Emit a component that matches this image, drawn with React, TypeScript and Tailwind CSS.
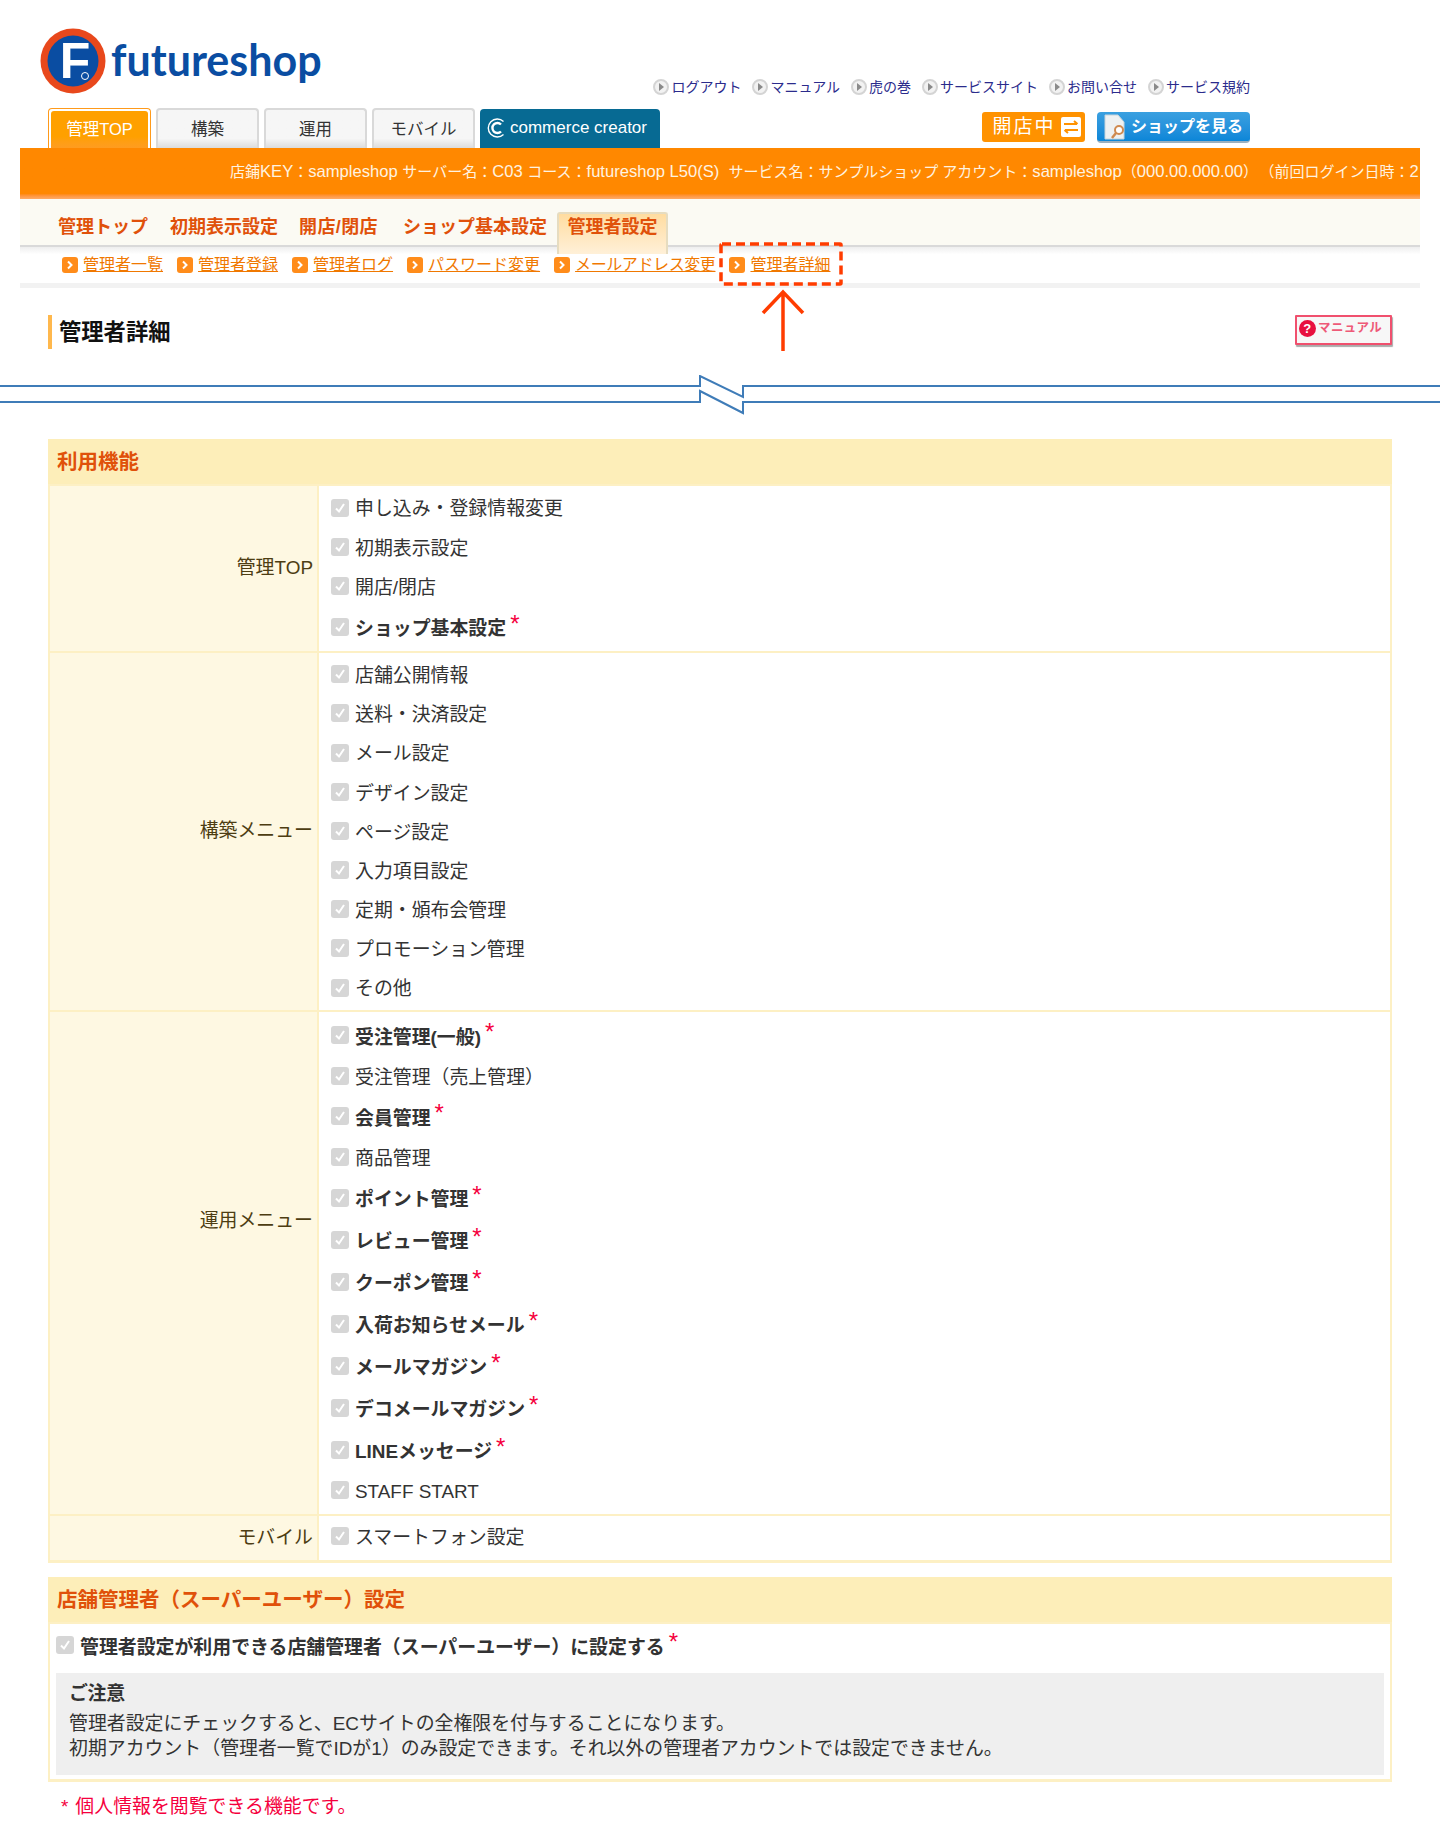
import type { ReactNode } from 'react';

type Perm = { label: string; bold?: boolean };

const topLinks = ['ログアウト', 'マニュアル', '虎の巻', 'サービスサイト', 'お問い合せ', 'サービス規約'];
const tabs = ['構築', '運用', 'モバイル'];
const subNav = [
  { label: '管理トップ', cls: 'ml-[38px]' },
  { label: '初期表示設定', cls: 'ml-[22px]' },
  { label: '開店/閉店', cls: 'ml-[21px] tracking-[0.4px]' },
  { label: 'ショップ基本設定', cls: 'ml-[25px]' },
];
const subLinks = [
  { label: '管理者一覧', cls: 'ml-[42px]' },
  { label: '管理者登録', cls: 'ml-[14px]' },
  { label: '管理者ログ', cls: 'ml-[14px]' },
  { label: 'パスワード変更', cls: 'ml-[14px]' },
  { label: 'メールアドレス変更', cls: 'ml-[14px] tracking-[-0.4px]' },
  { label: '管理者詳細', cls: 'ml-[14px]' },
];

const topMenu: Perm[] = [
  { label: '申し込み・登録情報変更' },
  { label: '初期表示設定' },
  { label: '開店/閉店' },
  { label: 'ショップ基本設定', bold: true },
];
const buildMenu: Perm[] = [
  { label: '店舗公開情報' },
  { label: '送料・決済設定' },
  { label: 'メール設定' },
  { label: 'デザイン設定' },
  { label: 'ページ設定' },
  { label: '入力項目設定' },
  { label: '定期・頒布会管理' },
  { label: 'プロモーション管理' },
  { label: 'その他' },
];
const opsMenu: Perm[] = [
  { label: '受注管理(一般)', bold: true },
  { label: '受注管理（売上管理）' },
  { label: '会員管理', bold: true },
  { label: '商品管理' },
  { label: 'ポイント管理', bold: true },
  { label: 'レビュー管理', bold: true },
  { label: 'クーポン管理', bold: true },
  { label: '入荷お知らせメール', bold: true },
  { label: 'メールマガジン', bold: true },
  { label: 'デコメールマガジン', bold: true },
  { label: 'LINEメッセージ', bold: true },
  { label: 'STAFF START' },
];

function CheckBox() {
  return (
    <span className="flex h-[18px] w-[18px] shrink-0 -translate-y-[1px] items-center justify-center rounded-[3px] bg-[#d6d6d6]">
      <svg width="12" height="12" viewBox="0 0 12 12" fill="none">
        <path d="M2 6.5 5 9.5 10 2" stroke="#fff" strokeWidth="2" />
      </svg>
    </span>
  );
}

function PermItem({ label, bold }: Perm) {
  return (
    <div className={`flex items-center gap-[6px] text-[#333] ${bold ? 'h-[42px] font-bold' : 'h-[39.2px]'}`}>
      <CheckBox />
      <span className={bold ? 'pt-[4px]' : 'pt-[2px]'}>{label}</span>
      {bold && <span className="-mt-[8px] -ml-[2px] text-[24px] font-normal leading-none text-[#f5003d]">*</span>}
    </div>
  );
}

function PermRow({ title, items, last, rowCls, labelCls }: { title: string; items: Perm[]; last?: boolean; rowCls: string; labelCls?: string }) {
  return (
    <div className={`flex ${last ? '' : 'border-b-2 border-[#fdf0c4]'}`}>
      <div className={`flex w-[269px] shrink-0 items-center justify-end border-r-2 border-[#fdf0c4] bg-[#fef8e2] pr-[4px] text-[#4d3d12] ${labelCls ?? ''}`}>
        {title}
      </div>
      <div className={`flex-1 pl-[12px] ${rowCls}`}>
        {items.map((item) => (
          <PermItem key={item.label} {...item} />
        ))}
      </div>
    </div>
  );
}

function SectionHead({ children }: { children: ReactNode }) {
  return (
    <div className="flex h-[45px] items-center bg-[#fdeeb9] pl-[9px] pt-[1px] text-[20.5px] font-bold text-[#e0510a]">
      {children}
    </div>
  );
}

function BreakLines() {
  return (
    <svg width="1440" height="44" viewBox="0 0 1440 44" fill="none" className="block" stroke="#3f7cb8" strokeWidth="2">
      <path d="M0 11H700V1L743 22V11H1440" />
      <path d="M0 27H700V16L743 38V27H1440" />
    </svg>
  );
}

function Wide({ children }: { children: ReactNode }) {
  return <span className="text-[16.6px]">{children}</span>;
}

export default function App() {
  return (
    <div className="relative h-[1840px] w-[1440px] overflow-hidden bg-white font-['Liberation_Sans','Noto_Sans_CJK_JP',sans-serif] text-[18.9px] leading-normal">
      {/* ヘッダー */}
      <div className="flex h-[108px] pl-[40px] pr-[190px]">
        <div className="mt-[28px] flex items-start">
          <svg width="66" height="66" viewBox="0 0 66 66">
            <circle cx="33" cy="33" r="32.5" fill="#e8481c" />
            <circle cx="33" cy="33" r="25.5" fill="#0a4da2" />
            <text x="35" y="50" textAnchor="middle" fontFamily="Liberation Sans" fontWeight="700" fontSize="50" fill="#fff">F</text>
            <circle cx="45" cy="48" r="3.5" fill="none" stroke="#fff" strokeWidth="1" />
          </svg>
          <span className="ml-[5px] mt-[7px] font-['Lato',sans-serif] text-[43px] font-bold leading-[50px] text-[#0a4da2]">futureshop</span>
        </div>
        <div className="ml-auto mt-[78px] flex h-[18px] items-center gap-[11px] text-[14px] text-[#2b2b8c]">
          {topLinks.map((link) => (
            <span key={link} className="flex items-center gap-[2px]">
              <span className="flex h-[16px] w-[16px] items-center justify-center rounded-full border-2 border-[#d4d4d4] bg-[#f2f2f2]">
                <span className="ml-[1px] h-0 w-0 border-y-[4px] border-l-[5px] border-y-transparent border-l-[#8a8a8a]" />
              </span>
              {link}
            </span>
          ))}
        </div>
      </div>

      <div className="flex h-[40px] items-end pl-[48px] pr-[190px]">
        <div className="flex h-[40px] w-[103px] items-center justify-center rounded-t-[4px] border border-b-0 border-[#ff9a1a] bg-white px-[2px] pt-[2px]">
          <div className="flex h-full w-full items-center justify-center rounded-t-[3px] bg-gradient-to-b from-[#ffa000] from-70% to-[#ff9c20] text-[16.5px] text-white">管理TOP</div>
        </div>
        {tabs.map((tab) => (
          <div key={tab} className="ml-[5px] flex h-[40px] w-[103px] items-center justify-center rounded-t-[4px] border-2 border-b-0 border-[#d9d9d9] bg-gradient-to-b from-[#f6f6f6] from-75% to-[#dcdcdc] text-[16.5px] text-[#333]">
            {tab}
          </div>
        ))}
        <div className="ml-[5px] flex h-[39px] w-[180px] items-center rounded-t-[4px] bg-[#076a93] pb-[2px] pl-[7px] text-[17px] text-white">
          <svg width="20" height="22" viewBox="0 0 20 22" fill="none" className="mr-[3px]">
            <path d="M16.5 4.5A9 9 0 1 0 16.5 17.5" stroke="#fff" strokeWidth="1.4" />
            <path d="M14 7.5A5 5 0 1 0 14 14.5" stroke="#fff" strokeWidth="2.4" />
          </svg>
          commerce creator
        </div>
        <div className="ml-auto mb-[6px] flex h-[30px] w-[103px] items-center justify-center gap-[5px] rounded-[3px] bg-[#ff9200] pl-[6px] text-[19px] tracking-[2px] text-white">
          開店中
          <svg width="20" height="20" viewBox="0 0 20 20" fill="none">
            <rect width="20" height="20" rx="2" fill="#fff" />
            <path d="M3 7H16M13 4 16.5 7M17 13H4M7 16 3.5 13" stroke="#ff9200" strokeWidth="2" />
          </svg>
        </div>
        <div className="mb-[5px] ml-[12px] flex h-[31px] w-[153px] items-center rounded-[4px] border-b-2 border-[#9ab0c0] bg-gradient-to-b from-[#3aa0e0] to-[#0a86d8] pl-[6px] text-[16px] font-bold text-white">
          <svg width="26" height="26" viewBox="0 0 26 26" fill="none" className="mr-[2px]">
            <path d="M2 1H15L21 8V25H2Z" fill="#eef1f2" stroke="#c5d3da" />
            <circle cx="16" cy="16" r="4" fill="#fff" stroke="#cf8a50" strokeWidth="2" />
            <path d="M13 19 9 24" stroke="#cf8a50" strokeWidth="2.5" />
          </svg>
          ショップを見る
        </div>
      </div>

      {/* 店舗情報バー */}
      <div className="mx-[20px] flex h-[51px] items-start overflow-hidden whitespace-pre bg-gradient-to-b from-[#ff8800] from-90% to-[#ffab66] pl-[210px] pt-[12px] text-[15px] text-[#fff3e0]">
        <span>
          店鋪<Wide>KEY</Wide>：<Wide>sampleshop </Wide>サーバー名：<Wide>C03 </Wide>コース：<Wide>futureshop L50(S)  </Wide>サービス名：サンプルショップ アカウント：<Wide>sampleshop</Wide>（<Wide>000.00.000.00</Wide>）<span className="ml-[9px]">（前回ログイン日時：<Wide>2</Wide></span>
        </span>
      </div>

      {/* サブナビ */}
      <div className="mx-[20px] flex h-[48px] items-start border-b-2 border-[#d9d9d9] bg-[#fbfaf3] text-[18px] font-bold text-[#e0510a]">
        {subNav.map((item) => (
          <span key={item.label} className={`mt-[15px] leading-[26px] ${item.cls}`}>{item.label}</span>
        ))}
        <span className="ml-[10px] mt-[13px] flex h-[42px] w-[111px] items-start justify-center rounded-t-[3px] border-2 border-b-0 border-[#e6dcc0] bg-gradient-to-b from-[#ffdca0] to-[#fff0d8] leading-[26px]">
          管理者設定
        </span>
      </div>
      <div className="mx-[20px] flex h-[36px] items-center bg-gradient-to-b from-[#eeeeee] from-0% to-white to-20% text-[16px] text-[#f07800]">
        {subLinks.map((item) => (
          <span key={item.label} className={`flex items-center gap-[5px] ${item.cls}`}>
            <span className="flex h-[16px] w-[16px] items-center justify-center rounded-[3px] bg-[#ff8c1a]">
              <svg width="8" height="10" viewBox="0 0 8 10" fill="none">
                <path d="M2 1.5 5.5 5 2 8.5" stroke="#fff" strokeWidth="2" />
              </svg>
            </span>
            <span className="underline">{item.label}</span>
          </span>
        ))}
      </div>
      <div className="mx-[20px] h-[5px] bg-[#f2f2f2]" />

      {/* ページタイトル */}
      <div className="mt-[27px] flex h-[33px] items-start pl-[48px] pr-[48px]">
        <div className="flex h-[34px] items-center border-l-4 border-[#ffb84d] pl-[7px] pt-[1px] text-[22.3px] font-bold text-[#111]">管理者詳細</div>
        <div className="ml-auto flex h-[30px] w-[97px] items-center rounded-[1px] border-2 border-[#f0506e] bg-[#f7f7f7] pb-[3px] pl-[2px] text-[12.5px] font-bold tracking-[0.4px] text-[#ee5a78] shadow-[1px_2px_1px_#aaa]">
          <span className="mr-[2px] flex h-[17px] w-[17px] items-center justify-center rounded-full bg-[#e8103f] text-[13px] text-white">?</span>
          マニュアル
        </div>
      </div>

      <div className="mt-[27px]">
        <BreakLines />
      </div>

      {/* 利用機能 */}
      <div className="mx-[48px] mt-[20px]">
        <SectionHead>利用機能</SectionHead>
        <div className="border-2 border-b-[3px] border-[#fdf0c4]">
          <PermRow title="管理TOP" items={topMenu} rowCls="pt-[3px] pb-[2px]" />
          <PermRow title="構築メニュー" items={buildMenu} rowCls="pt-[3px] pb-[2px]" />
          <PermRow title="運用メニュー" items={opsMenu} rowCls="pt-[3px] pb-[3px]" labelCls="pb-[84px]" />
          <PermRow title="モバイル" items={[{ label: 'スマートフォン設定' }]} rowCls="pt-[2px] pb-[3px]" last />
        </div>
      </div>

      {/* 店舗管理者 */}
      <div className="mx-[48px] mt-[14px]">
        <SectionHead>店舗管理者（スーパーユーザー）設定</SectionHead>
        <div className="border-2 border-b-[3px] border-[#fdf0c4] px-[6px] pb-[4px] pt-[1px]">
          <PermItem label="管理者設定が利用できる店舗管理者（スーパーユーザー）に設定する" bold />
          <div className="mt-[6px] bg-[#efefef] px-[13px] pb-[14px] pt-[8px] text-[#333]">
            <p className="mb-[4px] font-bold leading-[26px] tracking-[-0.3px]">ご注意</p>
            <p className="leading-[25px]">管理者設定にチェックすると、ECサイトの全権限を付与することになります。</p>
            <p className="leading-[25px]">初期アカウント（管理者一覧でIDが1）のみ設定できます。それ以外の管理者アカウントでは設定できません。</p>
          </div>
        </div>
      </div>
      <p className="ml-[61px] mt-[11px] flex gap-[7px] text-[#f5003d]">
        <span>*</span>
        <span>個人情報を閲覧できる機能です。</span>
      </p>

      {/* 注釈（赤枠と矢印） */}
      <svg width="124" height="44" viewBox="0 0 124 44" fill="none" className="absolute left-[719px] top-[242px]" stroke="#ff3c00" strokeWidth="3.5">
        <rect x="2" y="2" width="120" height="40" rx="1" strokeDasharray="9 5" />
      </svg>
      <svg width="44" height="62" viewBox="0 0 44 62" fill="none" className="absolute left-[761px] top-[289px]" stroke="#ff3c00" strokeWidth="3.5">
        <path d="M22 62V3M2 24 22 3 42 24" />
      </svg>
    </div>
  );
}
